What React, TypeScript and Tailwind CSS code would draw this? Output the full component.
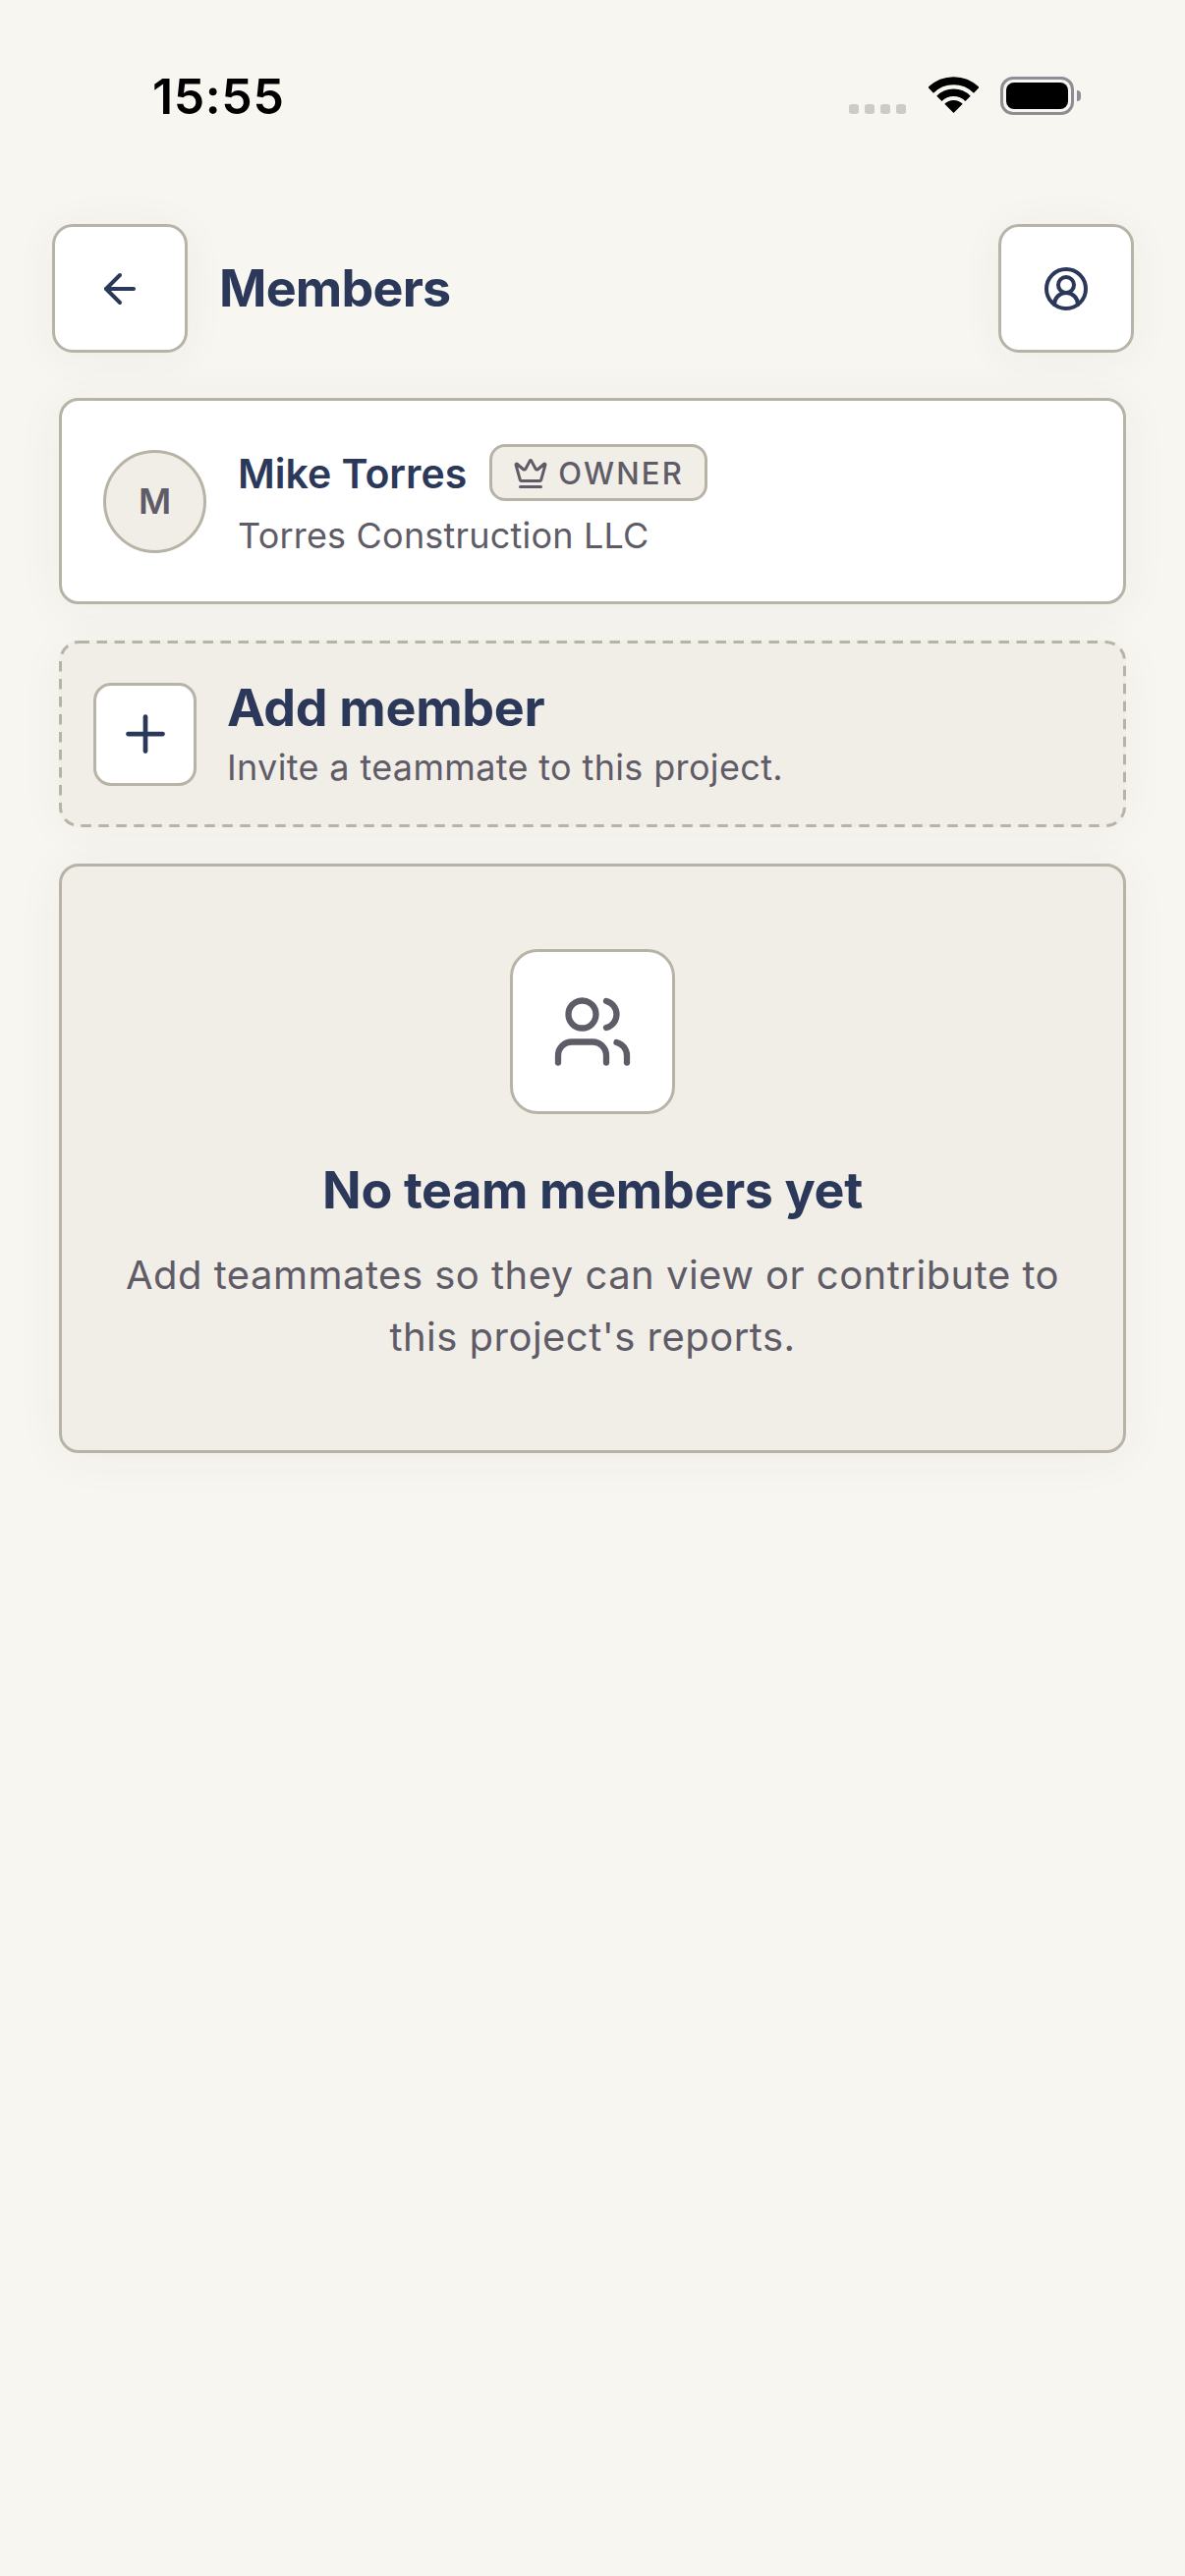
import { ArrowLeft, CircleUserRound, Crown, Plus, Users } from 'lucide-react';

function StatusBar() {
  return (
    <div className="flex h-[228px] items-start justify-between pl-[155px] pr-[106px] pt-[68px]">
      <span className="text-[50px] leading-[60px] font-semibold text-black tracking-[0.6px]">15:55</span>
      <div className="flex items-start pt-[10px]">
        <div className="mt-[28px] flex gap-[6px]">
          {[0, 1, 2, 3].map((i) => (
            <span key={i} className="h-[10px] w-[10px] rounded-[3px] bg-[#cdcbc7]" />
          ))}
        </div>
        <svg className="ml-[23px]" width="51" height="37" viewBox="0 0 51 37" fill="none">
          <path d="M2.2 13.8A33 33 0 0 1 48.8 13.8" stroke="#000" strokeWidth="8" />
          <path d="M10.9 22.4A20.6 20.6 0 0 1 40.1 22.4" stroke="#000" strokeWidth="7.5" />
          <path d="M25.5 37L16.3 27.8A13 13 0 0 1 34.7 27.8Z" fill="#000" />
        </svg>
        <div className="ml-[22px] flex items-center">
          <div className="h-[39px] w-[75px] rounded-[13px] border-[3px] border-[#8e8d93] p-[3px]">
            <div className="h-full w-full rounded-[8px] bg-black" />
          </div>
          <div className="ml-[3px] h-[11px] w-[4px] rounded-r-[4px] bg-[#8e8d93]" />
        </div>
      </div>
    </div>
  );
}

export default function App() {
  return (
    <div
      className="min-h-[2622px] bg-[#f7f6f1] text-[#2b3859]"
      style={{ fontFamily: 'Inter, "Noto Sans", sans-serif' }}
    >
      <StatusBar />

      <div className="flex items-center justify-between pl-[53px] pr-[52px]">
        <div className="flex items-center gap-[32px]">
          <button className="flex h-[131px] w-[138px] items-center justify-center rounded-[21px] border-[3px] border-[#b8b3a7] bg-white shadow-[0_4px_44px_rgba(60,50,30,0.05)]">
            <ArrowLeft size={48} strokeWidth={2} />
          </button>
          <h1 className="text-[52px] leading-[62px] font-bold tracking-[-0.8px]">Members</h1>
        </div>
        <button className="flex h-[131px] w-[138px] items-center justify-center rounded-[21px] border-[3px] border-[#b8b3a7] bg-white shadow-[0_4px_44px_rgba(60,50,30,0.05)]">
          <CircleUserRound size={48} strokeWidth={2} />
        </button>
      </div>

      <div className="flex flex-col gap-[37px] px-[60px] pt-[46px]">
        {/* owner */}
        <div className="flex h-[210px] items-center gap-[32px] rounded-[20px] border-[3px] border-[#b8b3a7] bg-white pl-[42px] shadow-[0_4px_50px_rgba(60,50,30,0.05)]">
          <div className="flex h-[105px] w-[105px] items-center justify-center rounded-full border-[3px] border-[#b8b3a7] bg-[#f1eee7] text-[36px] font-semibold text-[#5f5c68]">
            M
          </div>
          <div className="flex flex-col">
            <div className="flex items-center gap-[23px]">
              <span className="pt-[2px] text-[41px] leading-[58px] font-semibold">Mike Torres</span>
              <span className="flex h-[58px] items-center gap-[10px] rounded-[16px] border-[3px] border-[#b8b3a7] bg-[#f1eee7] px-[21px] pt-[2px] text-[31px] font-medium tracking-[2.2px] text-[#5f5c68]">
                <Crown size={36} strokeWidth={2} />
                OWNER
              </span>
            </div>
            <span className="mt-[10px] text-[36px] leading-[48px] text-[#5f5c68] tracking-[0.2px]">
              Torres Construction LLC
            </span>
          </div>
        </div>

        {/* add member */}
        <div className="relative flex h-[190px] items-center gap-[31px] rounded-[20px] bg-[#f1eee7] pl-[35px] shadow-[0_4px_50px_rgba(60,50,30,0.04)]">
          <svg className="absolute inset-0" width="1086" height="190" fill="none">
            <rect x="1.5" y="1.5" width="1083" height="187" rx="19" stroke="#b8b3a7" strokeWidth="3" strokeDasharray="10.5 7.5" />
          </svg>
          <div className="flex h-[105px] w-[105px] items-center justify-center rounded-[18px] border-[3px] border-[#b8b3a7] bg-white">
            <Plus size={60} strokeWidth={1.9} />
          </div>
          <div className="flex flex-col">
            <span className="text-[52px] leading-[62px] font-bold tracking-[-0.3px]">Add member</span>
            <span className="mt-[6px] text-[36px] leading-[46px] text-[#5f5c68] tracking-[0.35px]">
              Invite a teammate to this project.
            </span>
          </div>
        </div>

        {/* empty state */}
        <div className="flex h-[600px] flex-col items-center rounded-[20px] border-[3px] border-[#b8b3a7] bg-[#f1eee7] pt-[84px] shadow-[0_4px_50px_rgba(60,50,30,0.05)]">
          <div className="flex h-[168px] w-[168px] items-center justify-center rounded-[28px] border-[3px] border-[#b8b3a7] bg-white">
            <Users size={84} strokeWidth={1.8} className="text-[#5f5c68]" />
          </div>
          <h2 className="mt-[46px] text-[52px] leading-[64px] font-bold tracking-[-0.35px]">No team members yet</h2>
          <p className="mt-[22px] w-[1000px] text-center text-[40px] leading-[63px] text-[#5f5c68] tracking-[0.48px]">
            Add teammates so they can view or contribute to this project's reports.
          </p>
        </div>
      </div>
    </div>
  );
}
